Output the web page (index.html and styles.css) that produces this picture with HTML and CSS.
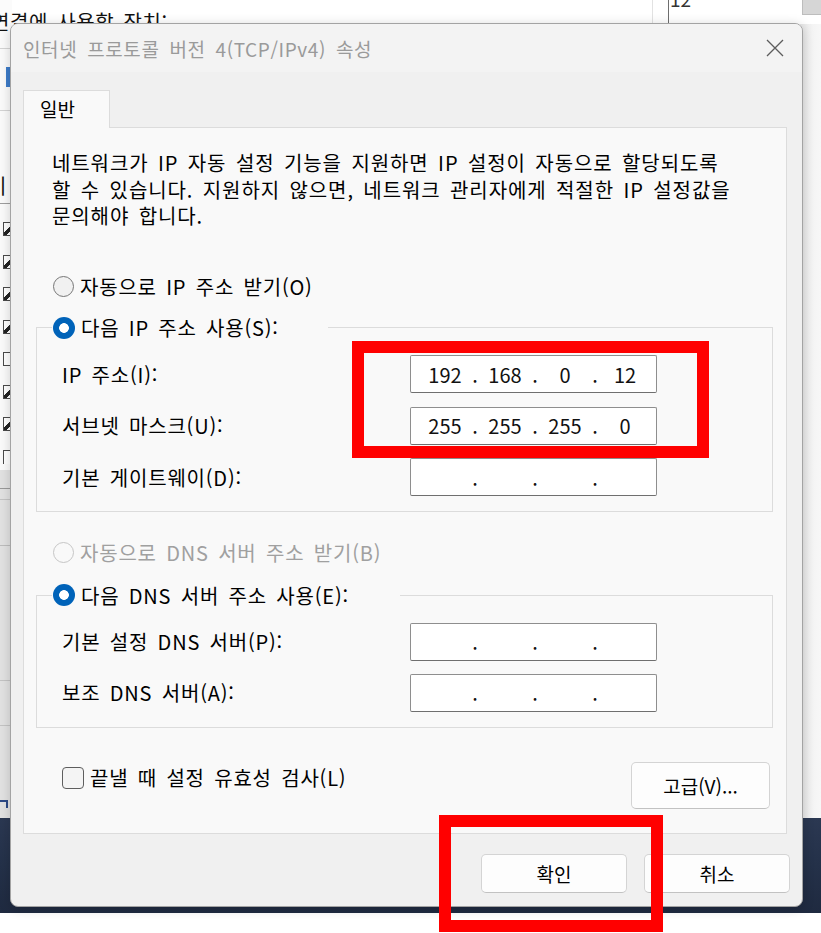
FILE: index.html
```html
<!DOCTYPE html>
<html lang="ko">
<head>
<meta charset="utf-8">
<title>인터넷 프로토콜 버전 4(TCP/IPv4) 속성</title>
<link rel="stylesheet" href="styles.css">
</head>
<body>
<div class="desktop">
  <div class="bg-vline bg-vline--light"></div>
  <div class="bg-vline bg-vline--dark"></div>
  <div class="bg-num">12</div>
  <div class="bg-corner-box"></div>
  <div class="bg-right"></div>

  <div class="bg-left">
    <div class="bl-line bl-line--a"></div>
    <div class="bl-line bl-line--b"></div>
    <div class="bl-blue"></div>
    <div class="bl-char">이</div>
    <div class="bl-line bl-line--c"></div>
    <div class="bl-list">
      <span class="bl-check bl-check--on"></span>
      <span class="bl-check bl-check--on"></span>
      <span class="bl-check bl-check--on"></span>
      <span class="bl-check bl-check--on"></span>
      <span class="bl-check"></span>
      <span class="bl-check bl-check--on"></span>
      <span class="bl-check bl-check--on"></span>
      <span class="bl-check bl-check--part"></span>
    </div>
    <div class="bl-gray">
      <div class="bl-gline"></div>
      <div class="bl-gline bl-gline--2"></div>
      <div class="bl-gline bl-gline--3"></div>
      <div class="bl-gline bl-gline--4"></div>
      <div class="bl-gline bl-gline--5"></div>
      <div class="bl-corner"></div>
    </div>
  </div>
  <div class="bg-top-text">연결에 사용할 장치:</div>

  <div class="bg-desk"></div>

  <section class="dialog">
    <header class="titlebar">
      <span class="title">인터넷 프로토콜 버전 4(TCP/IPv4) 속성</span>
      <svg class="close" width="18" height="18" viewBox="0 0 18 18" aria-hidden="true">
        <path d="M1 1 L17 17 M17 1 L1 17" stroke="#5c5c5c" stroke-width="1.3" fill="none"/>
      </svg>
    </header>

    <div class="dialog-body">
      <div class="tabs"><div class="tab">일반</div></div>

      <div class="panel">
        <p class="desc">네트워크가 IP 자동 설정 기능을 지원하면 IP 설정이 자동으로 할당되도록<br>할 수 있습니다. 지원하지 않으면, 네트워크 관리자에게 적절한 IP 설정값을<br>문의해야 합니다.</p>

        <div class="radio-row radio-row--first"><span class="radio"></span><span>자동으로 IP 주소 받기(O)</span></div>

        <fieldset class="group">
          <legend class="legend legend--ip"><span class="radio radio--on"></span><span>다음 IP 주소 사용(S):</span></legend>
          <div class="field-row field-row--first">
            <span class="field-label">IP 주소(I):</span>
            <div class="ip"><span class="seg">192</span><span class="dot">.</span><span class="seg">168</span><span class="dot">.</span><span class="seg">0</span><span class="dot">.</span><span class="seg">12</span></div>
          </div>
          <div class="field-row">
            <span class="field-label">서브넷 마스크(U):</span>
            <div class="ip"><span class="seg">255</span><span class="dot">.</span><span class="seg">255</span><span class="dot">.</span><span class="seg">255</span><span class="dot">.</span><span class="seg">0</span></div>
          </div>
          <div class="field-row">
            <span class="field-label">기본 게이트웨이(D):</span>
            <div class="ip"><span class="seg"></span><span class="dot">.</span><span class="seg"></span><span class="dot">.</span><span class="seg"></span><span class="dot">.</span><span class="seg"></span></div>
          </div>
        </fieldset>

        <div class="radio-row radio-row--disabled"><span class="radio radio--disabled"></span><span>자동으로 DNS 서버 주소 받기(B)</span></div>

        <fieldset class="group group--dns">
          <legend class="legend legend--dns"><span class="radio radio--on"></span><span>다음 DNS 서버 주소 사용(E):</span></legend>
          <div class="field-row field-row--first">
            <span class="field-label">기본 설정 DNS 서버(P):</span>
            <div class="ip"><span class="seg"></span><span class="dot">.</span><span class="seg"></span><span class="dot">.</span><span class="seg"></span><span class="dot">.</span><span class="seg"></span></div>
          </div>
          <div class="field-row field-row--tight">
            <span class="field-label">보조 DNS 서버(A):</span>
            <div class="ip"><span class="seg"></span><span class="dot">.</span><span class="seg"></span><span class="dot">.</span><span class="seg"></span><span class="dot">.</span><span class="seg"></span></div>
          </div>
        </fieldset>

        <div class="panel-footer">
          <div class="check-row"><span class="checkbox"></span><span>끝낼 때 설정 유효성 검사(L)</span></div>
          <button class="btn btn--adv" type="button">고급(V)...</button>
        </div>
      </div>

      <div class="actions">
        <button class="btn btn--action" type="button">확인</button>
        <button class="btn btn--action" type="button">취소</button>
      </div>
    </div>
  </section>

  <div class="mark mark--ip"></div>
  <div class="mark mark--ok"></div>
</div>
</body>
</html>
```

FILE: styles.css
```css
* { box-sizing: border-box; }

html, body {
  margin: 0;
  padding: 0;
}

body {
  width: 821px;
  height: 933px;
  overflow: hidden;
  background: #ffffff;
  font-family: "Noto Sans CJK KR", "Noto Sans", sans-serif;
  color: #000;
}

.desktop {
  position: relative;
  width: 821px;
  height: 933px;
  overflow: hidden;
  background: #ffffff;
}

/* ---------- background windows ---------- */
.bg-top-text {
  position: absolute;
  left: -9px;
  top: 9px;
  font-size: 20px;
  line-height: 26px;
  letter-spacing: 0.6px;
  word-spacing: 3px;
  white-space: nowrap;
  color: #111;
}

.bg-vline {
  position: absolute;
  top: 0;
  width: 1px;
  height: 24px;
}
.bg-vline--light { left: 652px; background: #e2e2e2; }
.bg-vline--dark { left: 668px; background: #6e6e6e; }

.bg-num {
  position: absolute;
  left: 670px;
  top: -14px;
  font-size: 19px;
  line-height: 26px;
  color: #333;
}

.bg-corner-box {
  position: absolute;
  left: 802px;
  top: -1px;
  width: 22px;
  height: 16px;
  background: #d6d6d6;
  border: 1px solid #bdbdbd;
}

.bg-right {
  position: absolute;
  left: 800px;
  top: 24px;
  width: 21px;
  height: 794px;
  background: linear-gradient(90deg, #e6e6e6, #f4f4f4 60%, #f7f7f7);
}

.bg-left {
  position: absolute;
  left: 0;
  top: 0;
  width: 12px;
  height: 818px;
  background: #fbfbfb;
}

.bl-line {
  position: absolute;
  left: 0;
  width: 12px;
  height: 1px;
  background: #d4d4d4;
}
.bl-line--a { top: 48px; }
.bl-line--b { top: 110px; }
.bl-line--c { top: 203px; background: #9e9e9e; }

.bl-blue {
  position: absolute;
  left: 6px;
  top: 67px;
  width: 8px;
  height: 20px;
  background: #3d7cc9;
}

.bl-char {
  position: absolute;
  left: -12px;
  top: 173px;
  font-size: 20px;
  line-height: 26px;
  color: #111;
}

.bl-list {
  position: absolute;
  left: 3px;
  top: 222px;
  display: flex;
  flex-direction: column;
  gap: 18.5px;
}

.bl-check {
  display: block;
  width: 14px;
  height: 14px;
  border: 1px solid #4a4a4a;
  background: #fff;
}
.bl-check--on { background: linear-gradient(135deg, #fff 40%, #222 40% 60%, #fff 60%); }
.bl-check--part { border-right: none; border-bottom: none; }

.bl-gray {
  position: absolute;
  left: 0;
  top: 470px;
  width: 12px;
  height: 348px;
  background: #e2e2e2;
}
.bl-gline {
  position: absolute;
  left: 0;
  top: 18px;
  width: 12px;
  height: 1px;
  background: #9a9a9a;
}
.bl-gline--2 { top: 29px; background: #c4c4c4; }
.bl-gline--3 { top: 75px; background: #bdbdbd; }
.bl-gline--4 { top: 210px; background: #c4c4c4; }
.bl-gline--5 { top: 255px; background: #c4c4c4; }
.bl-corner {
  position: absolute;
  left: 0;
  top: 330px;
  width: 8px;
  height: 8px;
  border-top: 2px solid #2d4a86;
  border-right: 2px solid #2d4a86;
}

.bg-desk {
  position: absolute;
  left: 0;
  top: 818px;
  width: 821px;
  height: 95px;
  background: linear-gradient(180deg, #2b3852 0%, #243149 50%, #1f2a40 100%);
}

/* ---------- dialog ---------- */
.dialog {
  position: absolute;
  left: 10px;
  top: 23px;
  width: 793px;
  height: 884px;
  border: 1px solid #a3a3a3;
  border-radius: 8px;
  background: #f0f0f0;
  box-shadow: 0 2px 12px rgba(0, 0, 0, 0.18);
  overflow: hidden;
}

.titlebar {
  height: 48px;
  display: flex;
  align-items: center;
  justify-content: space-between;
  padding: 0 18px 0 12px;
  background: #f3f3f3;
}

.title {
  font-size: 19px;
  letter-spacing: 0.6px;
  word-spacing: 4px;
  color: #9a9a9a;
  white-space: nowrap;
}

.close { display: block; }

.dialog-body {
  padding: 18px 15px 0 12px;
}

.tabs {
  display: flex;
  position: relative;
  z-index: 1;
  margin-bottom: -1px;
}

.tab {
  width: 87px;
  height: 38px;
  padding-left: 16px;
  border: 1px solid #dcdcdc;
  border-bottom: none;
  background: #f9f9f9;
  font-size: 19px;
  line-height: 36px;
}

.panel {
  border: 1px solid #dcdcdc;
  background: #f9f9f9;
  padding: 22px 0 24px 0;
}

.desc {
  margin: 0;
  padding-left: 28px;
  font-size: 20px;
  line-height: 26.5px;
  letter-spacing: 0.9px;
  word-spacing: 3px;
  white-space: nowrap;
}

.radio-row,
.legend,
.check-row,
.field-label {
  font-size: 20px;
  letter-spacing: 0.8px;
  word-spacing: 3px;
  white-space: nowrap;
}

.radio-row {
  display: flex;
  align-items: center;
  gap: 6px;
  height: 26px;
  padding-left: 29px;
}
.radio-row--first { margin-top: 44px; }
.radio-row--disabled { margin-top: 27px; color: #a0a0a0; }

.radio {
  flex: none;
  width: 21px;
  height: 21px;
  border-radius: 50%;
  border: 1px solid #767676;
  background: #f1f1f1;
}
.radio--on {
  border: none;
  width: 22px;
  height: 22px;
  background: radial-gradient(circle, #ffffff 0 4.5px, #0063b9 5.2px);
}
.radio--disabled {
  border-color: #c6c6c6;
  background: #f9f9f9;
}

.group {
  margin: 15px 13px 0 12px;
  padding: 0 0 15px 0;
  border: 1px solid #dcdcdc;
  min-width: 0;
}
.group--dns { margin-top: 17px; }

.legend {
  margin-left: 15px;
  padding: 0 0 0 1px;
  height: 26px;
  display: flex;
  align-items: center;
  gap: 6px;
}
.legend--ip { width: 276px; }
.legend--dns { width: 348px; }

.field-row {
  display: flex;
  align-items: center;
  height: 38px;
  margin-top: 13.5px;
  padding-left: 25px;
}
.field-row--first { margin-top: 14.5px; }
.field-row--tight { margin-top: 13px; }

.field-label { width: 348px; flex: none; }

.ip {
  width: 247px;
  height: 38px;
  flex: none;
  display: flex;
  align-items: center;
  padding-left: 10px;
  background: #ffffff;
  border: 1px solid #8e8e8e;
  border-bottom-color: #6f6f6f;
  border-radius: 2px;
  font-size: 20px;
  color: #111;
}

.seg {
  width: 48px;
  text-align: center;
}
.dot {
  width: 12px;
  text-align: center;
}

.panel-footer {
  margin-top: 34px;
  display: flex;
  justify-content: space-between;
  align-items: flex-start;
  padding: 0 16px 0 38px;
}

.check-row {
  margin-top: 3px;
  height: 26px;
  display: flex;
  align-items: center;
  gap: 6px;
}

.checkbox {
  flex: none;
  width: 22px;
  height: 22px;
  border: 1px solid #5e5e5e;
  border-radius: 4px;
  background: #f4f4f4;
}

.btn {
  font-family: inherit;
  font-size: 19px;
  color: #000;
  background: #fdfdfd;
  border: 1px solid #d4d4d4;
  border-bottom-color: #c2c2c2;
  border-radius: 5px;
  padding: 0;
  cursor: default;
}

.btn--adv {
  width: 139px;
  height: 47px;
}

.actions {
  margin: 20px -3px 0 0;
  display: flex;
  justify-content: flex-end;
  gap: 17px;
}

.btn--action {
  width: 146px;
  height: 39px;
}

/* ---------- red annotation boxes ---------- */
.mark {
  position: absolute;
  border: 12px solid #ff0000;
  z-index: 5;
}
.mark--ip { left: 352px; top: 341px; width: 357px; height: 117px; }
.mark--ok { left: 439px; top: 815px; width: 224px; height: 117px; }
```
